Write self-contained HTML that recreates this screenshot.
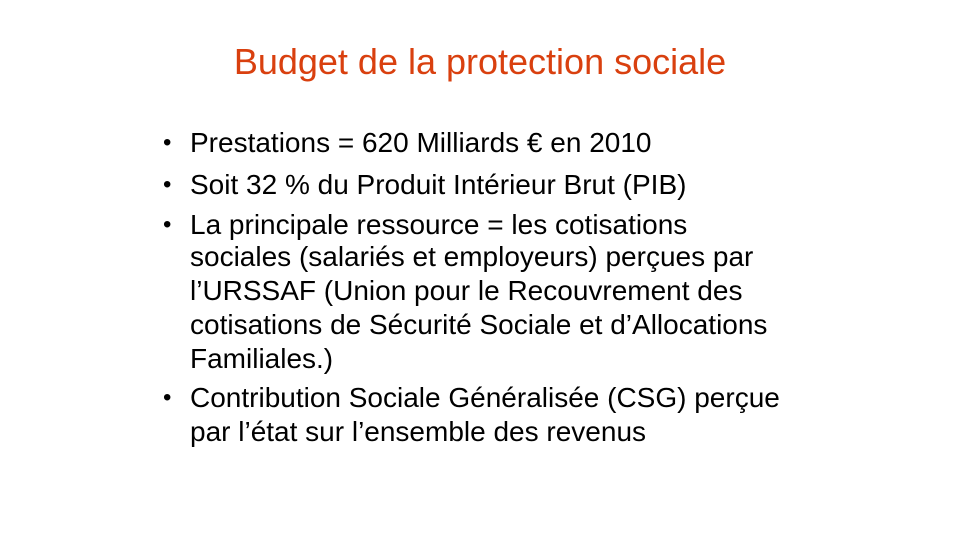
<!DOCTYPE html>
<html><head><meta charset="utf-8"><style>
body{margin:0;width:960px;height:540px;background:#fff;position:relative;overflow:hidden;font-family:"Liberation Sans",Arial,sans-serif}
.t{position:absolute;left:0;width:960px;top:40px;text-align:center;font-size:36px;color:#d9400f;line-height:44px}
.l{position:absolute;left:190px;font-size:28px;color:#000;line-height:30px;white-space:nowrap}
.b{position:absolute;left:163px;font-size:24px;line-height:30px}
</style></head><body>
<div class="t">Budget de la protection sociale</div>
<div class="b" style="top:128px">•</div><div class="l" style="top:128px">Prestations = 620 Milliards € en 2010</div>
<div class="b" style="top:170px">•</div><div class="l" style="top:170px">Soit 32 % du Produit Intérieur Brut (PIB)</div>
<div class="b" style="top:210px">•</div><div class="l" style="top:210px">La principale ressource = les cotisations</div>
<div class="l" style="top:242px">sociales (salariés et employeurs) perçues par</div>
<div class="l" style="top:276px">l’URSSAF (Union pour le Recouvrement des</div>
<div class="l" style="top:310px">cotisations de Sécurité Sociale et d’Allocations</div>
<div class="l" style="top:344px">Familiales.)</div>
<div class="b" style="top:383px">•</div><div class="l" style="top:383px">Contribution Sociale Généralisée (CSG) perçue</div>
<div class="l" style="top:417px">par l’état sur l’ensemble des revenus</div>
</body></html>
